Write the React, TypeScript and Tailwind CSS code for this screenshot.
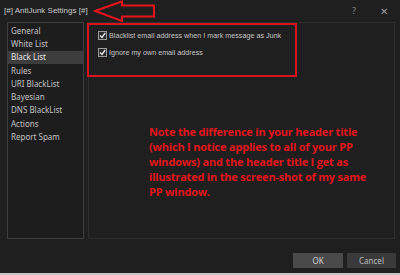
import React from 'react';

const navItems = ['General', 'White List', 'Black List', 'Rules', 'URI BlackList', 'Bayesian', 'DNS BlackList', 'Actions', 'Report Spam'];

const options = ['Blacklist email address when I mark message as Junk', 'Ignore my own email address'];

const noteLines = [
  'Note the difference in your header title',
  '(which I notice applies to all of your PP',
  'windows) and the header title I get as',
  'illustrated in the screen-shot of my same',
  'PP window.',
];

const CheckBox: React.FC = () => (
  <span className="w-[9px] h-[9px] border border-[#9a9a9a] bg-[#2a2a2a] flex items-center justify-center shrink-0">
    <svg width="7" height="7" viewBox="0 0 7 7">
      <path d="M1 3.5 L3 5.5 L6.2 1" fill="none" stroke="#e8e8e8" strokeWidth="1.3" />
    </svg>
  </span>
);

const App: React.FC = () => {
  return (
    <div className="w-[400px] h-[275px] bg-[#c4c4c4] overflow-hidden" style={{ fontFamily: '"Noto Sans", "Open Sans", sans-serif' }}>
      <div className="h-[273px] bg-[#1f1f1f] flex flex-col">
        {/* Title bar */}
        <header className="h-[22px] flex items-center pl-[4px] pr-[12px] shrink-0">
          <span className="text-[8px] text-[#c9c9c9] leading-none" style={{ fontFamily: '"Liberation Sans", sans-serif' }}>[#] AntiJunk Settings [#]</span>
          <svg className="ml-[5px]" width="64" height="22" viewBox="0 0 64 22">
            <path d="M2 11 L29 1.5 L29 5.5 L61 5.5 L61 16.5 L29 16.5 L29 21 Z" fill="none" stroke="#e8141c" strokeWidth="2" strokeLinejoin="miter" />
          </svg>
          <span className="ml-auto text-[9px] text-[#8a8a8a]">?</span>
          <span className="ml-[24px] text-[10px] text-[#9a9a9a]">✕</span>
        </header>

        {/* Body */}
        <div className="flex gap-[4px] pl-[7px] pr-[5px] h-[217px] shrink-0">
          <nav className="w-[77px] border border-[#3e3e3e] bg-[#1d1d1d] pt-[1px]">
            {navItems.map((item) => (
              <div
                key={item}
                className={`h-[13.3px] flex items-center pl-[3px] text-[8px] leading-none ${
                  item === 'Black List' ? 'bg-[#3d3d3d] text-[#e4e4e4]' : 'text-[#c2c2c2]'
                }`}
              >
                {item}
              </div>
            ))}
          </nav>

          <section className="relative flex-1 border border-[#2e2e2e]">
            {/* red annotation box */}
            <div className="absolute left-[-2px] top-[0px] w-[210px] h-[54px] border-2 border-[#d8141c]" />
            <div className="flex flex-col gap-[8px] pl-[9px] pt-[8px]">
              {options.map((o) => (
                <label key={o} className="flex items-center gap-[2px] h-[9px] text-[7.2px] text-[#c4c4c4] leading-none" style={{ fontFamily: '"Liberation Sans", sans-serif' }}>
                  <CheckBox />
                  {o}
                </label>
              ))}
            </div>
            <div className="ml-[60px] mt-[67px] flex flex-col text-[11px] font-bold text-[#e3151d] leading-[15px]" style={{ fontFamily: '"Open Sans", sans-serif', letterSpacing: '-0.2px' }}>
              {noteLines.map((l) => (
                <span key={l} className="whitespace-nowrap">{l}</span>
              ))}
            </div>
          </section>
        </div>

        {/* Footer */}
        <footer className="flex-1 flex items-start justify-end gap-[4px] pr-[4px] pt-[14px]">
          <button className="w-[50px] h-[15px] bg-[#4a4a4a] text-[8px] text-[#d0d0d0] leading-none">OK</button>
          <button className="w-[49px] h-[15px] bg-[#3a3a3a] text-[8px] text-[#bdbdbd] leading-none">Cancel</button>
        </footer>
      </div>
    </div>
  );
};

export default App;
